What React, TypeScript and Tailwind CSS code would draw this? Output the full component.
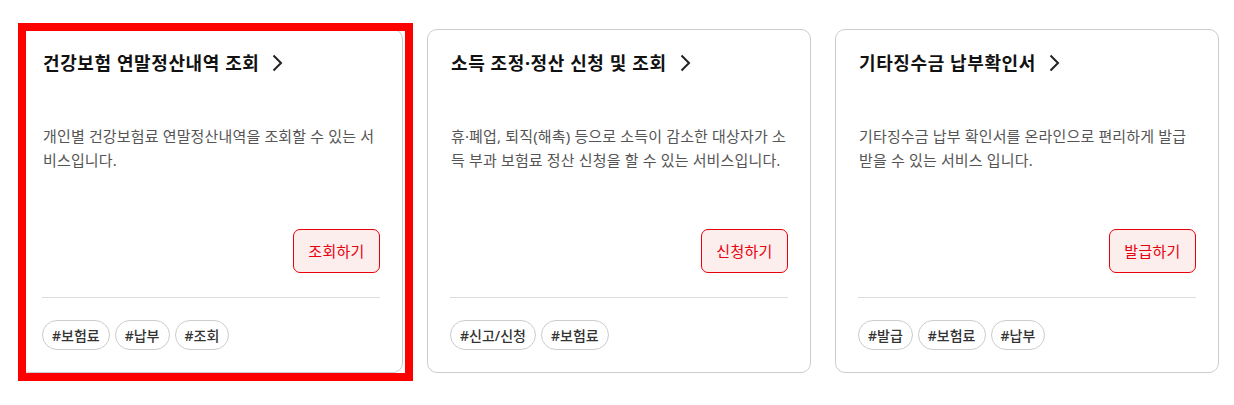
import React from "react";

type Service = {
  title: string;
  description: string;
  action: string;
  tags: string[];
};

const SERVICES: Service[] = [
  {
    title: "건강보험 연말정산내역 조회",
    description: "개인별 건강보험료 연말정산내역을 조회할 수 있는 서비스입니다.",
    action: "조회하기",
    tags: ["#보험료", "#납부", "#조회"],
  },
  {
    title: "소득 조정·정산 신청 및 조회",
    description:
      "휴·폐업, 퇴직(해촉) 등으로 소득이 감소한 대상자가 소득 부과 보험료 정산 신청을 할 수 있는 서비스입니다.",
    action: "신청하기",
    tags: ["#신고/신청", "#보험료"],
  },
  {
    title: "기타징수금 납부확인서",
    description:
      "기타징수금 납부 확인서를 온라인으로 편리하게 발급 받을 수 있는 서비스 입니다.",
    action: "발급하기",
    tags: ["#발급", "#보험료", "#납부"],
  },
];

function Chevron() {
  return (
    <svg width="12" height="18" viewBox="0 0 12 18" fill="none" className="ml-[12px] shrink-0">
      <path d="M2.5 1.5 L10 9 L2.5 16.5" stroke="#222" strokeWidth="2" />
    </svg>
  );
}

function ServiceCard({ service }: { service: Service }) {
  return (
    <div className="flex h-[344px] w-[384px] flex-col rounded-[10px] border border-[#cccccc] bg-white px-[22px] pt-[20px] pb-[22px]">
      <div className="flex items-center pl-px">
        <h3 className="text-[18px] font-bold leading-[26px] tracking-[0.6px] text-[#111]">
          {service.title}
        </h3>
        <Chevron />
      </div>
      <p className="mt-[48px] break-all pl-px text-[15px] leading-[24px] tracking-[0.15px] text-[#555]">
        {service.description}
      </p>
      <div className="mt-auto flex justify-end">
        <button
          type="button"
          className="h-[44px] w-[87px] rounded-[7px] border border-[#e8000b] bg-[#fdeeee] text-[15px] tracking-[0.3px] text-[#e8000b]"
        >
          {service.action}
        </button>
      </div>
      <div className="mt-[24px] border-t border-[#dcdcdc]" />
      <div className="mt-[22px] flex gap-[5px]">
        {service.tags.map((tag) => (
          <span
            key={tag}
            className="flex h-[30px] items-center rounded-full border border-[#cccccc] px-[9px] text-[14px] font-medium text-[#333]"
          >
            {tag}
          </span>
        ))}
      </div>
    </div>
  );
}

export default function App() {
  return (
    <div
      className="relative h-[405px] w-[1234px] bg-white pt-[29px] pl-[19px]"
      style={{ fontFamily: '"Noto Sans", "Noto Sans CJK KR", sans-serif' }}
    >
      <div className="flex gap-6">
        {SERVICES.map((service) => (
          <ServiceCard key={service.title} service={service} />
        ))}
      </div>
      <div className="pointer-events-none absolute left-[18px] top-[23px] h-[358px] w-[395px] border-[8px] border-[#ff0000]" />
    </div>
  );
}
